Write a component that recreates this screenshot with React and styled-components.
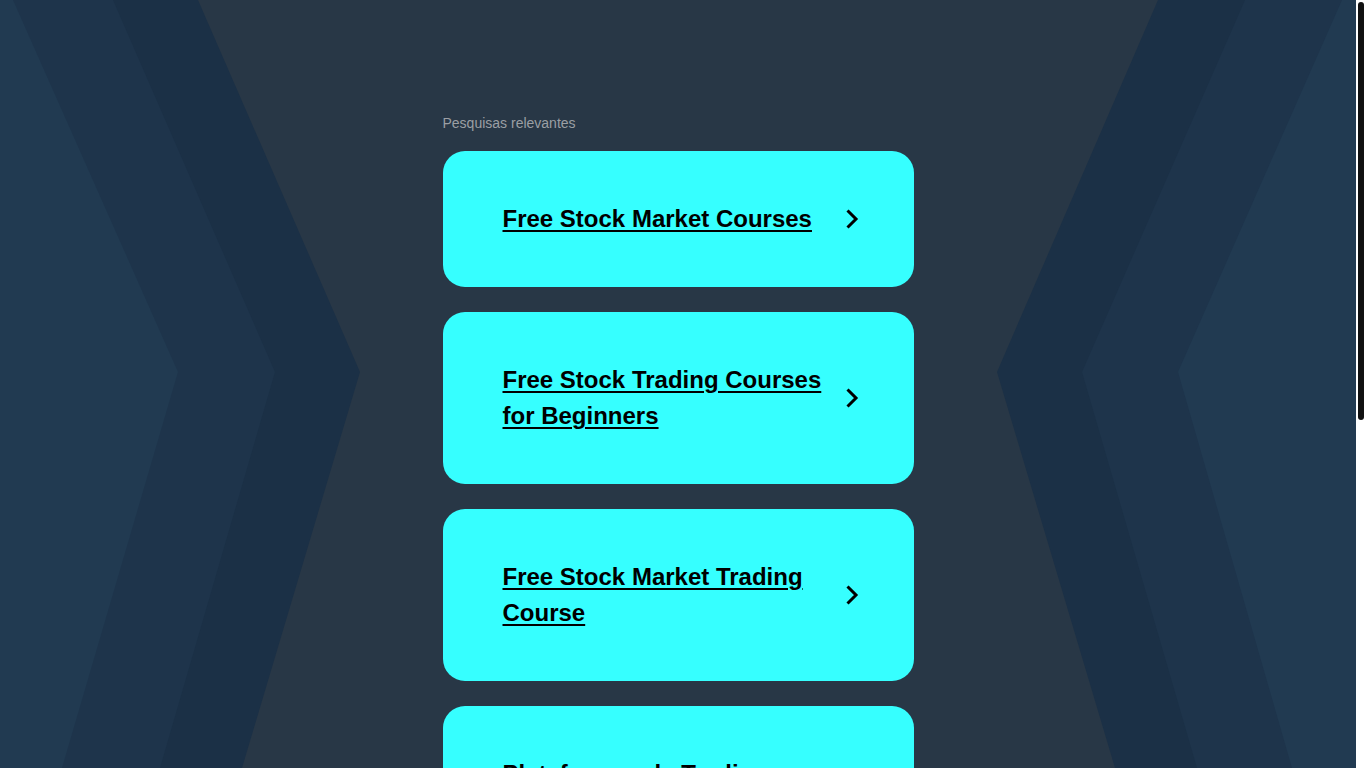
import React from 'react'
import styled, { createGlobalStyle } from 'styled-components'

const searches = [
  'Free Stock Market Courses',
  'Free Stock Trading Courses for Beginners',
  'Free Stock Market Trading Course',
  'Plataformas de Trading Online',
  'Stock Market Classes',
  'Online Trading Courses',
]

const GlobalStyle = createGlobalStyle`
  html, body {
    margin: 0;
    padding: 0;
    height: 100%;
    overflow: hidden;
    background: #283746;
    font-family: "Liberation Sans", Arial, sans-serif;
  }
`

const Frame = styled.div`
  display: flex;
  height: 100vh;
`

const Viewport = styled.div`
  flex: 1;
  position: relative;
  overflow-y: auto;
  scrollbar-width: none;
  background: #283746;
`

const Rail = styled.div`
  flex: none;
  width: 10px;
  padding: 2px;
  box-sizing: border-box;
  background: #ffffff;
`

const Thumb = styled.div`
  height: 418px;
  border-radius: 3px;
  background: #111111;
`

const Backdrop = styled.svg`
  position: absolute;
  top: 0;
  left: 0;
  width: 100%;
  height: 100vh;
  pointer-events: none;
`

const Page = styled.main`
  position: relative;
  width: 471px;
  margin: 0 auto;
  padding: 115px 0 150px;
`

const Label = styled.div`
  font-size: 14px;
  line-height: 16px;
  color: #9b9fa4;
  margin-bottom: 20px;
`

const List = styled.div`
  display: flex;
  flex-direction: column;
  gap: 25px;
`

const Card = styled.a`
  display: flex;
  align-items: center;
  gap: 14px;
  padding: 50px 55px 50px 60px;
  background: #36ffff;
  border-radius: 22px;
  color: #000;
  text-decoration: none;
  cursor: pointer;
`

const CardText = styled.span`
  flex: 1;
  font-size: 24px;
  line-height: 36px;
  font-weight: bold;
  text-decoration: underline;
  text-decoration-thickness: 2px;
  text-underline-offset: 3px;
`

const Arrow = styled.svg`
  flex: none;
  width: 14px;
  height: 22px;
`

const Footer = styled.footer`
  margin-top: 80px;
  text-align: center;
  font-size: 12px;
  color: #9b9fa4;
`

const Chevron = () => (
  <Arrow viewBox="0 0 14 22">
    <polyline points="2.5,2.5 11,11 2.5,19.5" fill="none" stroke="#000" strokeWidth="3" />
  </Arrow>
)

const Background = () => (
  <Backdrop viewBox="0 0 1356 768" preserveAspectRatio="none">
    <polygon points="0,0 198,0 360,372 242,768 0,768" fill="#1b3046" />
    <polygon points="0,0 113,0 275,372 160,768 0,768" fill="#1e344b" />
    <polygon points="0,0 13,0 178,372 62,768 0,768" fill="#213a51" />
    <polygon points="1356,0 1158,0 997,372 1115,768 1356,768" fill="#1b3046" />
    <polygon points="1356,0 1245,0 1082,372 1197,768 1356,768" fill="#1e344b" />
    <polygon points="1356,0 1342,0 1178,372 1292,768 1356,768" fill="#213a51" />
  </Backdrop>
)

const App = () => {
  return (
    <>
      <GlobalStyle />
      <Frame>
        <Viewport>
          <Background />
          <Page>
            <Label>Pesquisas relevantes</Label>
            <List>
              {searches.map((item) => (
                <Card key={item}>
                  <CardText>{item}</CardText>
                  <Chevron />
                </Card>
              ))}
            </List>
            <Footer>Política de privacidade</Footer>
          </Page>
        </Viewport>
        <Rail>
          <Thumb />
        </Rail>
      </Frame>
    </>
  )
}

export default App
